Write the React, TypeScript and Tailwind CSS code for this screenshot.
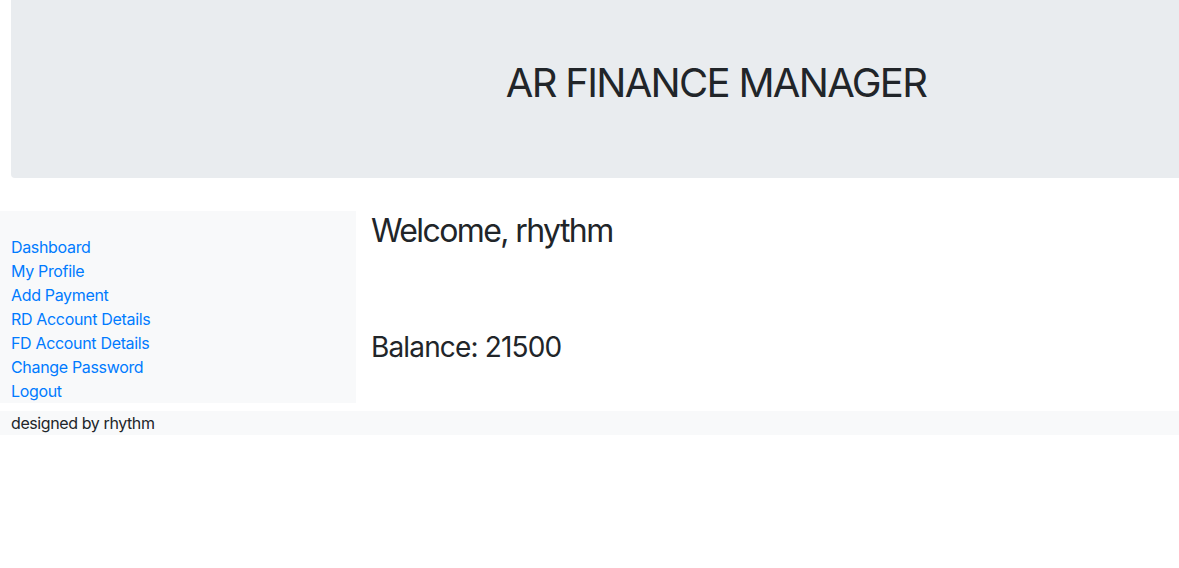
const links = [
  "Dashboard",
  "My Profile",
  "Add Payment",
  "RD Account Details",
  "FD Account Details",
  "Change Password",
  "Logout",
];

export default function App() {
  return (
    <div className="min-h-[568px] overflow-hidden bg-white font-['Inter',sans-serif] text-[#212529]">
      {/* Header */}
      <div className="pl-[11px]">
        <div className="h-[178px] w-[1410px] rounded-b-[4px] bg-[#e9ecef] pt-[59px] text-center">
          <h1 className="text-[40px] leading-[48px] font-normal tracking-[-1.7px]">AR FINANCE MANAGER</h1>
        </div>
      </div>

      {/* Body */}
      <div className="mt-[33px] flex">
        <div className="w-[356px] bg-[#f8f9fa] pl-[11px] pt-[24px]">
          {links.map((l) => (
            <div key={l} className="text-[16px] leading-[24px] tracking-[-0.33px]">
              <a href="#" className="text-[#007bff]">
                {l}
              </a>
            </div>
          ))}
        </div>
        <div className="flex-1 pl-[15px]">
          <h2 className="mt-[1px] text-[32px] leading-[38px] font-normal tracking-[-1.6px]">Welcome, rhythm</h2>
          <h3 className="mt-[80px] text-[28px] leading-[34px] font-normal tracking-[-0.85px]">Balance: 21500</h3>
        </div>
      </div>

      {/* Footer */}
      <div className="mt-[8px] h-[24px] bg-[#f8f9fa] pl-[11px] text-[16px] leading-[24px] tracking-[-0.4px]">
        designed by rhythm
      </div>
    </div>
  );
}
